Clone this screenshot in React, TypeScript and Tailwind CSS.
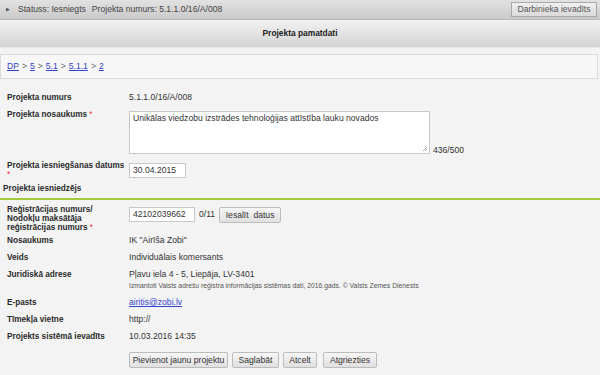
import React from 'react';

const font = { fontFamily: '"Liberation Sans", Arial, sans-serif' };

function Btn({ children, className = '' }: { children: React.ReactNode; className?: string }) {
  return (
    <button
      className={`h-[16px] whitespace-nowrap border border-[#bcbcbc] rounded-[2px] bg-gradient-to-b from-[#f6f6f6] to-[#e0e0e0] px-0 text-center text-[8.6px] leading-[14px] text-[#333] ${className}`}
    >
      {children}
    </button>
  );
}

function Row({ label, children }: { label: string; children?: React.ReactNode }) {
  return (
    <div className="flex pt-[4px] pb-[4px]">
      <div className="w-[122px] shrink-0 font-bold text-[8.2px] leading-[9px] text-[#2a2a2a]">{label}</div>
      <div className="leading-[9px] text-[#333]">{children}</div>
    </div>
  );
}

export default function App() {
  return (
    <div style={font} className="w-[600px] h-[375px] overflow-hidden bg-[#f3f3f3] text-[8.6px] text-[#333]">
      {/* status bar */}
      <div className="h-[20px] flex items-center bg-gradient-to-b from-[#e2e2e2] to-[#cacaca] border-b border-[#b9b9b9] pl-[6px] pr-[3px]">
        <span className="text-[5px] text-[#555] mr-[8px]">▶</span>
        <span className="text-[#444]">Statuss: Iesniegts</span>
        <span className="text-[#444] ml-[6px]">Projekta numurs: 5.1.1.0/16/A/008</span>
        <button className="ml-auto h-[15px] w-[86px] whitespace-nowrap border border-[#a9a9a9] bg-gradient-to-b from-[#f0f0f0] to-[#dadada] text-[8.6px] text-[#555]">
          Darbinieka ievadīts
        </button>
      </div>

      {/* title */}
      <div className="h-[28px] flex items-center justify-center bg-gradient-to-b from-[#f1f1f1] to-[#d4d4d4] border-b border-[#e6e6e6] font-bold text-[8.4px] text-[#222]">
        Projekta pamatdati
      </div>

      {/* breadcrumb */}
      <div className="mt-[6px] w-[598px] h-[25px] flex items-center border border-[#dcdcdc] bg-[#f7f7f7] px-[6px] text-[#666]">
        <a className="text-[#3344cc] underline">DP</a>
        <span className="mx-[3px]">&gt;</span>
        <a className="text-[#3344cc] underline">5</a>
        <span className="mx-[3px]">&gt;</span>
        <a className="text-[#3344cc] underline">5.1</a>
        <span className="mx-[3px]">&gt;</span>
        <a className="text-[#3344cc] underline">5.1.1</a>
        <span className="mx-[3px]">&gt;</span>
        <a className="text-[#3344cc] underline">2</a>
      </div>

      <div className="mt-[9px] px-[7px]">
        <div className="flex pt-[5px] h-[21px]">
          <div className="w-[122px] shrink-0 font-bold text-[8.2px] leading-[9px] text-[#2a2a2a]">Projekta numurs</div>
          <div className="leading-[9px]">5.1.1.0/16/A/008</div>
        </div>

        <div className="flex pb-[5px]">
          <div className="w-[122px] shrink-0 font-bold text-[8.2px] leading-[9px] text-[#2a2a2a] pt-[1px]">
            Projekta nosaukums<span className="text-[#e33] font-normal"> *</span>
          </div>
          <div className="mt-[2px] w-[301px] h-[43px] border border-[#c8c8c8] bg-white px-[3px] pt-[2px] leading-[9px] relative">
            Unikālas viedzobu izstrādes tehnoloģijas attīstība lauku novados
            <svg className="absolute right-[1px] bottom-[1px]" width="6" height="6" viewBox="0 0 6 6">
              <path d="M5 1 L1 5 M5 3 L3 5" stroke="#999" strokeWidth="0.8" />
            </svg>
          </div>
          <div className="self-end ml-[3px] leading-[9px] mb-[-1px]">436/500</div>
        </div>

        <div className="flex pt-[2px]">
          <div className="w-[122px] shrink-0 font-bold text-[8.2px] leading-[9px] text-[#2a2a2a] whitespace-nowrap">
            Projekta iesniegšanas datums
            <div className="text-[#e33] font-normal">*</div>
          </div>
          <div className="mt-[2px] w-[57px] h-[15px] border border-[#c8c8c8] bg-white px-[3px] leading-[13px]">30.04.2015</div>
        </div>
      </div>

      <div className="mt-[5px] px-[3px] font-bold text-[8.2px] leading-[9px] text-[#2a2a2a]">Projekta iesniedzējs</div>
      <div className="mt-[5px] h-[2px] bg-[#a5c93c]" />

      <div className="px-[7px]">
        <div className="flex pt-[5px]">
          <div className="w-[122px] shrink-0 font-bold text-[8.2px] leading-[9px] text-[#2a2a2a] whitespace-nowrap">
            Reģistrācijas numurs/
            <br />
            Nodokļu maksātāja
            <br />
            reģistrācijas numurs<span className="text-[#e33] font-normal"> *</span>
          </div>
          <div className="mt-[2px] flex items-center h-[15px]">
            <div className="w-[66px] h-[15px] border border-[#c8c8c8] bg-white px-[3px] leading-[13px]">42102039662</div>
            <span className="ml-[4px]">0/11</span>
            <Btn className="ml-[4px] w-[62px] h-[15px]">Iesalīt&nbsp; datus</Btn>
          </div>
        </div>

        <Row label="Nosaukums">IK "Airīša Zobi"</Row>
        <Row label="Veids">Individuālais komersants</Row>
        <div className="flex pt-[4px] pb-[4px]">
          <div className="w-[122px] shrink-0 font-bold text-[8.2px] leading-[9px] text-[#2a2a2a]">Juridiskā adrese</div>
          <div className="leading-[9px]">
            Pļavu iela 4 - 5, Liepāja, LV-3401
            <div className="mt-[2px] text-[6.8px] text-[#555] whitespace-nowrap">
              Izmantoti Valsts adrešu reģistra informācijas sistēmas dati, 2016.gads. © Valsts Zemes Dienests
            </div>
          </div>
        </div>
        <Row label="E-pasts">
          <a className="text-[#3344cc] underline">airitis@zobi.lv</a>
        </Row>
        <Row label="Tīmekļa vietne">http://</Row>
        <Row label="Projekts sistēmā ievadīts">10.03.2016 14:35</Row>

        <div className="mt-[7px] ml-[122px] flex gap-[4px]">
          <Btn className="w-[99px]">Pievienot jaunu projektu</Btn>
          <Btn className="w-[47px]">Saglabāt</Btn>
          <Btn className="w-[34px]">Atcelt</Btn>
          <Btn className="ml-[2px] w-[54px]">Atgriezties</Btn>
        </div>
      </div>
    </div>
  );
}
